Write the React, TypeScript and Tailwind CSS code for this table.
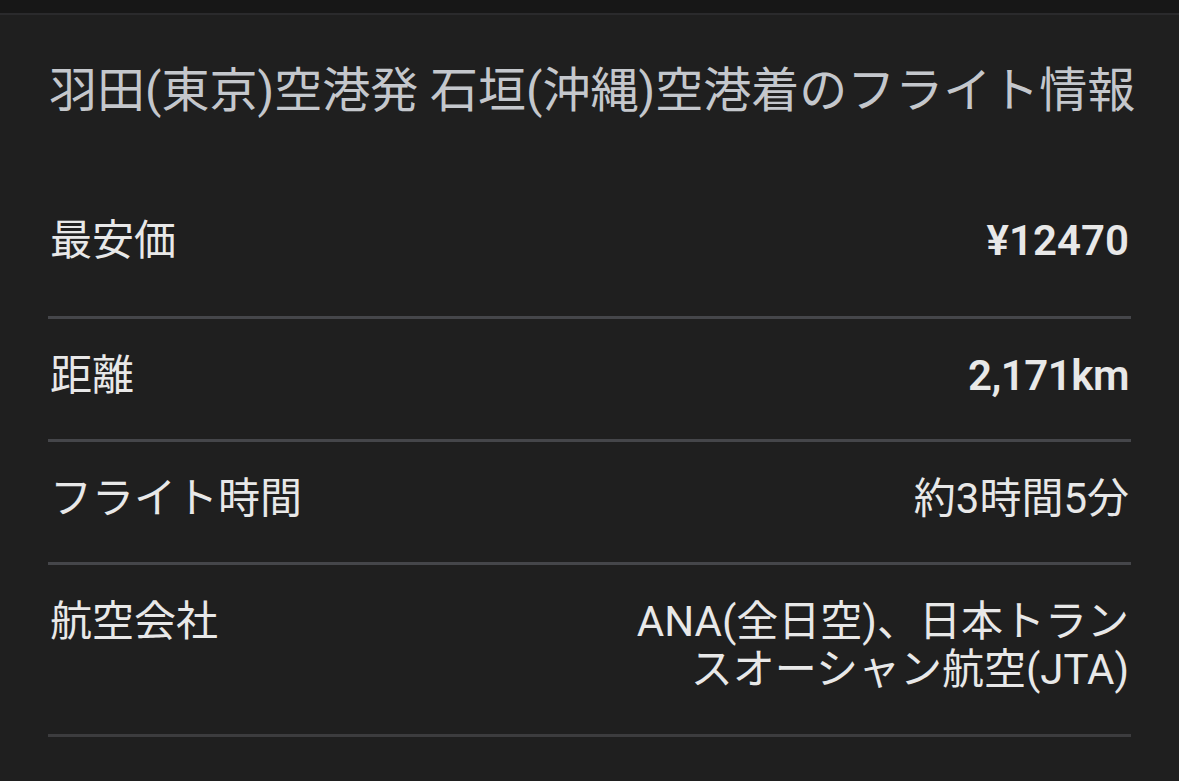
import React from "react";

const font = { fontFamily: 'Roboto, "Noto Sans CJK JP", sans-serif' };

export default function App() {
  return (
    <div
      className="w-[1179px] h-[781px] bg-[#1f1f1f] overflow-hidden"
      style={font}
    >
      <div className="h-[15px] bg-[#171717] border-b-2 border-[#2a2a2c]" />
      <div className="px-[48px]">
        <h2 className="mt-[48px] text-[48px] leading-[56px] text-[#c4c7cc] pl-[1px] whitespace-nowrap">
          羽田(東京)空港発 石垣(沖縄)空港着のフライト情報
        </h2>
        <div className="mt-[98px] flex justify-between items-start pb-[51px] border-b-[3px] border-[#45464a] text-[42px] leading-[48px] text-[#e8e8e8]">
          <span className="pl-[2px]">最安価</span>
          <span className="font-semibold pr-[2px]">¥12470</span>
        </div>
        <div className="pt-[33px] pb-[39px] flex justify-between items-start border-b-[3px] border-[#45464a] text-[42px] leading-[48px] text-[#e8e8e8]">
          <span className="pl-[2px]">距離</span>
          <span className="font-semibold pr-[2px] tracking-[-0.5px]">2,171km</span>
        </div>
        <div className="pt-[33px] pb-[39px] flex justify-between items-start border-b-[3px] border-[#45464a] text-[42px] leading-[48px] text-[#e8e8e8]">
          <span className="pl-[2px]">フライト時間</span>
          <span className="pr-[2px]">約3時間5分</span>
        </div>
        <div className="pt-[33px] pb-[40px] flex justify-between items-start border-b-[3px] border-[#3c3c3e] text-[42px] leading-[48px] text-[#e8e8e8]">
          <span className="pl-[2px]">航空会社</span>
          <span className="pr-[2px] text-right">
            <span className="block">ANA(全日空)、日本トラン</span>
            <span className="block">スオーシャン航空(JTA)</span>
          </span>
        </div>
      </div>
    </div>
  );
}
